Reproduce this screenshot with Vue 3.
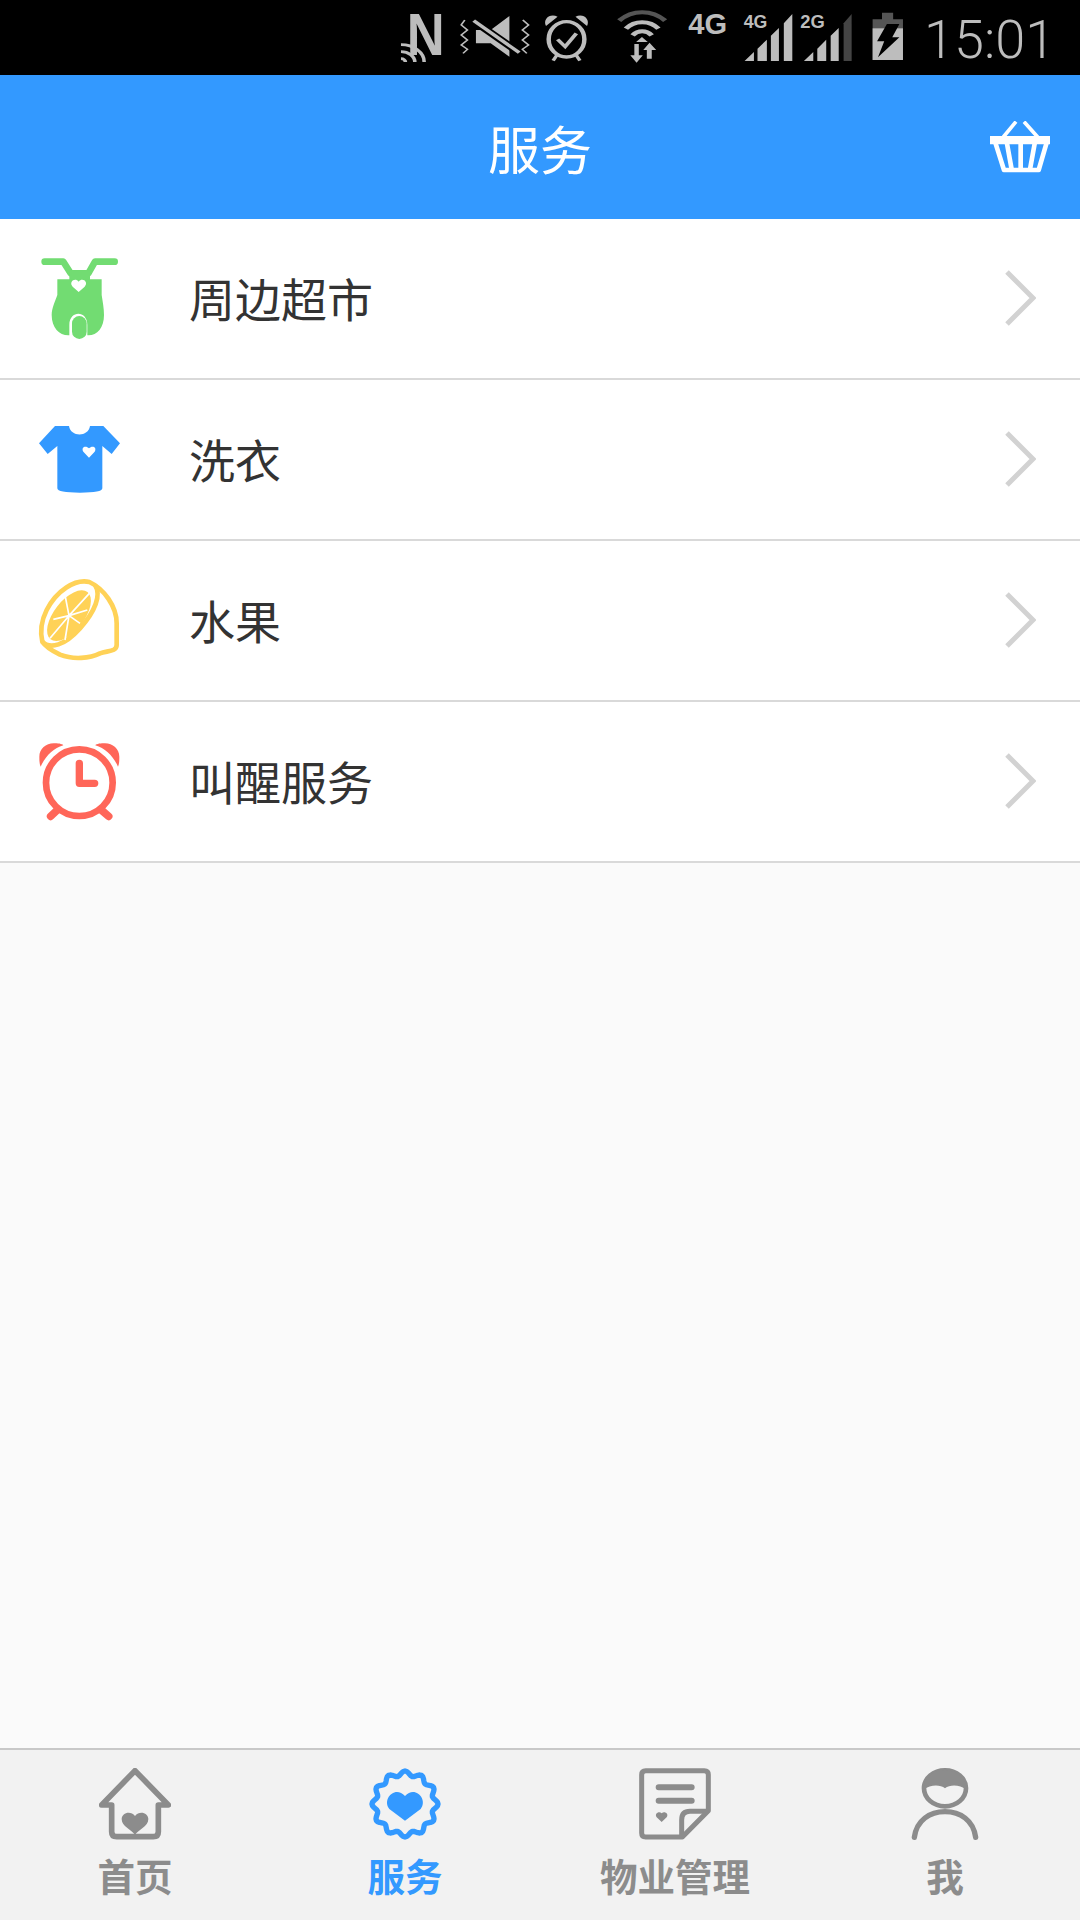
<script setup>
const services = [
  { name: '周边超市', icon: 'scooter' },
  { name: '洗衣', icon: 'shirt' },
  { name: '水果', icon: 'lemon' },
  { name: '叫醒服务', icon: 'clock' },
];

const tabs = [
  { name: '首页', icon: 'home' },
  { name: '服务', icon: 'badge', active: true },
  { name: '物业管理', icon: 'note' },
  { name: '我', icon: 'user' },
];

// wavy outline of the badge, 12 lobes round the centre
const badgePath = (() => {
  const pts = [];
  for (let i = 0; i < 120; i++) {
    const a = (i / 120) * Math.PI * 2;
    const r = 92 + 7 * Math.cos(a * 12);
    pts.push(`${(1035 + r * Math.cos(a)).toFixed(1)} ${(192 + r * Math.sin(a)).toFixed(1)}`);
  }
  return 'M' + pts.join('L') + 'Z';
})();
</script>

<template>
  <div class="page">
    <div class="status-bar">
      <svg class="status-icons" viewBox="0 0 1190 225" preserveAspectRatio="none" width="531" height="75">
        <!-- nfc -->
        <text x="60" y="165" class="st-bold" font-size="175" textLength="85" lengthAdjust="spacingAndGlyphs">N</text>
        <g fill="none" stroke="#bdbdbd" stroke-width="8">
          <path d="M47 176a10 10 0 0 1 10 10" />
          <path d="M47 155a31 31 0 0 1 31 31" />
          <path d="M47 134a52 52 0 0 1 52 52" />
        </g>
        <!-- muted -->
        <path d="M215 90H248L290 48V170L248 130H215Z" fill="#bdbdbd" />
        <path d="M205 58L312 158" stroke="#000" stroke-width="20" />
        <path d="M210 62L312 158" stroke="#bdbdbd" stroke-width="9" />
        <g fill="none" stroke="#bdbdbd" stroke-width="4">
          <path d="M190 60L182 75L196 90L182 105L196 120L182 135L196 148L186 160" />
          <path d="M320 60L333 75L319 90L333 105L319 120L333 135L319 148L329 160" />
        </g>
        <!-- alarm -->
        <ellipse cx="418" cy="118" rx="40" ry="53" fill="none" stroke="#bdbdbd" stroke-width="10" />
        <path d="M372 78C364 56 382 38 398 50ZM464 78C472 56 454 38 438 50Z" fill="#bdbdbd" />
        <path d="M398 118L415 140L440 100" fill="none" stroke="#bdbdbd" stroke-width="9" />
        <path d="M388 182L396 166M448 182L440 166" stroke="#bdbdbd" stroke-width="8" />
        <!-- wifi -->
        <g fill="none" stroke-width="12">
          <path d="M536 62C565 28 610 28 639 62" stroke="#555" />
          <path d="M551 86C570 60 605 60 624 86" stroke="#bdbdbd" />
          <path d="M566 106C578 90 597 90 609 106" stroke="#bdbdbd" />
        </g>
        <path d="M587 111L600 126H574Z" fill="#bdbdbd" />
        <path d="M570 132H580V166H589L575 188L561 166H570Z" fill="#bdbdbd" />
        <path d="M598 176H609V150H619L604 128L590 150H598Z" fill="#bdbdbd" />
        <!-- network -->
        <text x="691" y="103" class="st-bold" font-size="90" textLength="87" lengthAdjust="spacingAndGlyphs">4G</text>
        <text x="815" y="85" class="st-bold" font-size="55" textLength="53" lengthAdjust="spacingAndGlyphs">4G</text>
        <path d="M817 183L838 156V183ZM846 146L867 119V183H846ZM876 107L894 84V183H876ZM905 70L924 42V183H905Z" fill="#bdbdbd" />
        <text x="942" y="85" class="st-bold" font-size="55" textLength="55" lengthAdjust="spacingAndGlyphs">2G</text>
        <path d="M950 183L971 156V183ZM980 146L1000 119V183H980ZM1010 107L1028 84V183H1010Z" fill="#bdbdbd" />
        <path d="M1039 70L1057 42V183H1039Z" fill="#444" />
        <!-- battery -->
        <path d="M1125 38H1150V58H1172V180H1104V58H1125Z" fill="#555" />
        <path d="M1104 85H1172V180H1104Z" fill="#bdbdbd" />
        <path d="M1136 72H1164L1148 112H1164L1116 172L1130 124H1114Z" fill="#000" />
      </svg>
      <span class="time">15:01</span>
    </div>

    <header class="top-bar">
      <span></span>
      <h1 class="title">服务</h1>
      <svg class="basket" viewBox="90 60 180 156" width="60" height="52">
        <path d="M130 108L168 62M233 108L192 62" fill="none" stroke="#fff" stroke-width="11" />
        <path d="M90 105H270V130H90Z" fill="#fff" />
        <path d="M106 125L132 207H236L260 125" fill="none" stroke="#fff" stroke-width="14" stroke-linejoin="round" />
        <path d="M141 128L155 205M182 128V205M224 128L210 205" fill="none" stroke="#fff" stroke-width="14" />
      </svg>
    </header>

    <main class="content">
      <ul class="service-list">
        <li v-for="item in services" :key="item.name" class="service-row">
          <svg v-if="item.icon === 'scooter'" class="service-icon" viewBox="105 72 270 270">
            <path d="M134 95H190L212 130H265L285 95H344" fill="none" stroke="#72dc72" stroke-width="20" stroke-linecap="round" stroke-linejoin="round" />
            <path d="M208 122H270V150H208Z" fill="#72dc72" />
            <path d="M172 148H305V195C308 215 312 235 312 255C312 295 290 318 262 316V285C262 240 208 240 208 285V316C180 318 155 295 155 255C155 235 165 215 172 195Z" fill="#72dc72" />
            <rect x="216" y="258" width="44" height="69" rx="22" fill="#72dc72" />
            <path d="M236 186L218 170C205 156 225 141 236 155C247 141 267 156 254 170Z" fill="#fff" />
          </svg>

          <svg v-else-if="item.icon === 'shirt'" class="service-icon" viewBox="105 555 270 270">
            <path d="M165 588H207C212 622 265 622 270 588H310L360 640L335 672L307 648V775Q307 788 240 788Q172 788 172 775V648L143 672L117 640Z" fill="#3399ff" />
            <path d="M267 683L250 665C242 651 258 645 267 655C276 645 292 651 284 665Z" fill="#fff" />
          </svg>

          <svg v-else-if="item.icon === 'lemon'" class="service-icon" viewBox="105 48 270 270">
            <g fill="none" stroke="#ffd257" stroke-width="14" stroke-linejoin="round">
              <path d="M268 66C225 56 170 92 140 150C124 182 120 215 127 245C138 262 160 274 180 284C220 300 270 295 300 280C322 272 350 276 350 255V190C350 140 312 86 268 66Z" />
              <path d="M127 245C150 270 195 255 240 205C285 155 305 105 285 75" />
            </g>
            <ellipse cx="207" cy="167" rx="90" ry="45" transform="rotate(-52 207 167)" fill="#ffd257" />
            <path d="M207 167L268 100M207 167L195 105M207 167L160 178M207 167L150 235M207 167L195 240M207 167L262 150M207 167L240 190" fill="none" stroke="#fff" stroke-width="5" />
          </svg>

          <svg v-else-if="item.icon === 'clock'" class="service-icon" viewBox="105 531 270 270">
            <circle cx="238" cy="668" r="100" fill="none" stroke="#ff6659" stroke-width="20" />
            <path d="M118 590C118 565 140 548 165 550C178 550 190 553 190 556C160 565 135 590 122 620C118 612 118 600 118 590Z" fill="#ff6659" />
            <path d="M358 590C358 565 336 548 311 550C298 550 286 553 286 556C316 565 341 590 354 620C358 612 358 600 358 590Z" fill="#ff6659" />
            <path d="M152 769L172 750M326 769L304 750" stroke="#ff6659" stroke-width="23" stroke-linecap="round" />
            <path d="M238 610V670H284" fill="none" stroke="#ff6659" stroke-width="22" stroke-linecap="round" stroke-linejoin="round" />
          </svg>

          <span class="service-name">{{ item.name }}</span>

          <svg class="chevron" viewBox="0 0 32 58" width="32" height="58">
            <path d="M3 3L29 29L3 55" fill="none" stroke="#d2d2d2" stroke-width="5" />
          </svg>
        </li>
      </ul>
    </main>

    <nav class="tab-bar">
      <div v-for="tab in tabs" :key="tab.name" class="tab" :class="{ active: tab.active }">
        <svg v-if="tab.icon === 'home'" class="tab-icon" viewBox="117 84 216 216">
          <path d="M125 195L225 92L325 195H295V275Q295 290 280 290H170Q155 290 155 275V195Z" fill="none" stroke="#8c8c8c" stroke-width="17" stroke-linejoin="round" />
          <path d="M225 285C215 268 185 260 185 237C185 218 212 210 225 228C238 210 265 218 265 237C265 260 235 268 225 285Z" fill="#8c8c8c" />
        </svg>

        <svg v-else-if="tab.icon === 'badge'" class="tab-icon" viewBox="927 84 216 216">
          <path :d="badgePath" fill="none" stroke="#3399ff" stroke-width="16" stroke-linejoin="round" />
          <path d="M1035 242L988 207C965 178 1005 135 1035 168C1065 135 1105 178 1082 207Z" fill="#3399ff" />
        </svg>

        <svg v-else-if="tab.icon === 'note'" class="tab-icon" viewBox="177 84 216 216">
          <path d="M303 291H197Q185 291 185 279V104Q185 92 197 92H373Q385 92 385 104V212L307 291Z" fill="none" stroke="#8c8c8c" stroke-width="15" stroke-linejoin="round" />
          <path d="M385 214H330Q305 214 305 240V291" fill="none" stroke="#8c8c8c" stroke-width="15" />
          <path d="M236 142H335M236 182H335" fill="none" stroke="#8c8c8c" stroke-width="18" stroke-linecap="round" />
          <path d="M245 246L230 232C222 220 238 212 245 220C252 212 268 220 260 232Z" fill="#8c8c8c" />
        </svg>

        <svg v-else class="tab-icon" viewBox="987 84 216 216">
          <ellipse cx="1095" cy="145" rx="63" ry="54" fill="none" stroke="#8c8c8c" stroke-width="14" />
          <path d="M1032 148C1032 112 1060 91 1095 91C1130 91 1158 112 1158 148C1140 134 1110 132 1095 145C1080 132 1050 134 1032 148Z" fill="#8c8c8c" />
          <path d="M1003 292C1010 240 1050 215 1095 215C1140 215 1180 240 1187 292" fill="none" stroke="#8c8c8c" stroke-width="16" stroke-linecap="round" />
        </svg>

        <span class="tab-label">{{ tab.name }}</span>
      </div>
    </nav>
  </div>
</template>

<style scoped>
.page {
  width: 1080px;
  height: 1920px;
  display: flex;
  flex-direction: column;
  font-family: "Noto Sans CJK SC", "Noto Sans", sans-serif;
  background: #fafafa;
  overflow: hidden;
}

.status-bar {
  height: 75px;
  flex: none;
  background: #000;
  display: flex;
  align-items: flex-start;
  padding-left: 380px;
  box-sizing: border-box;
}

.status-icons {
  display: block;
  flex: none;
}

.st-bold {
  font-family: "Liberation Sans", sans-serif;
  font-weight: 700;
  fill: #bdbdbd;
}

.time {
  margin-left: 13px;
  font-family: Roboto, sans-serif;
  font-weight: 300;
  font-size: 54px;
  line-height: 80px;
  color: #bdbdbd;
  white-space: nowrap;
}

.top-bar {
  height: 144px;
  flex: none;
  background: #3399ff;
  display: grid;
  grid-template-columns: 1fr auto 1fr;
  align-items: center;
  padding-right: 30px;
  padding-left: 30px;
}

.title {
  margin: 0;
  font-size: 52px;
  font-weight: 400;
  color: #fff;
}

.basket {
  justify-self: end;
}

.content {
  flex: 1;
}

.service-list {
  margin: 0;
  padding: 0;
  list-style: none;
  background: #fff;
}

.service-row {
  height: 161px;
  box-sizing: border-box;
  border-bottom: 2px solid #d9d9d9;
  display: flex;
  align-items: center;
  padding-left: 35px;
  padding-right: 44px;
}

.service-icon {
  width: 90px;
  height: 90px;
  flex: none;
}

.service-name {
  margin-left: 64px;
  padding-bottom: 4px;
  flex: 1;
  font-size: 46px;
  color: #333;
}

.chevron {
  flex: none;
  margin-bottom: 2px;
}

.tab-bar {
  height: 172px;
  flex: none;
  box-sizing: border-box;
  border-top: 2px solid #c8c8c8;
  background: #f2f2f2;
  display: grid;
  grid-template-columns: repeat(4, 1fr);
}

.tab {
  display: flex;
  flex-direction: column;
  align-items: center;
  padding-top: 18px;
  color: #8c8c8c;
}

.tab.active {
  color: #3399ff;
}

.tab-icon {
  width: 72px;
  height: 72px;
}

.tab-label {
  margin-top: 9px;
  font-size: 37.5px;
  line-height: 52px;
  font-weight: 700;
}
</style>
